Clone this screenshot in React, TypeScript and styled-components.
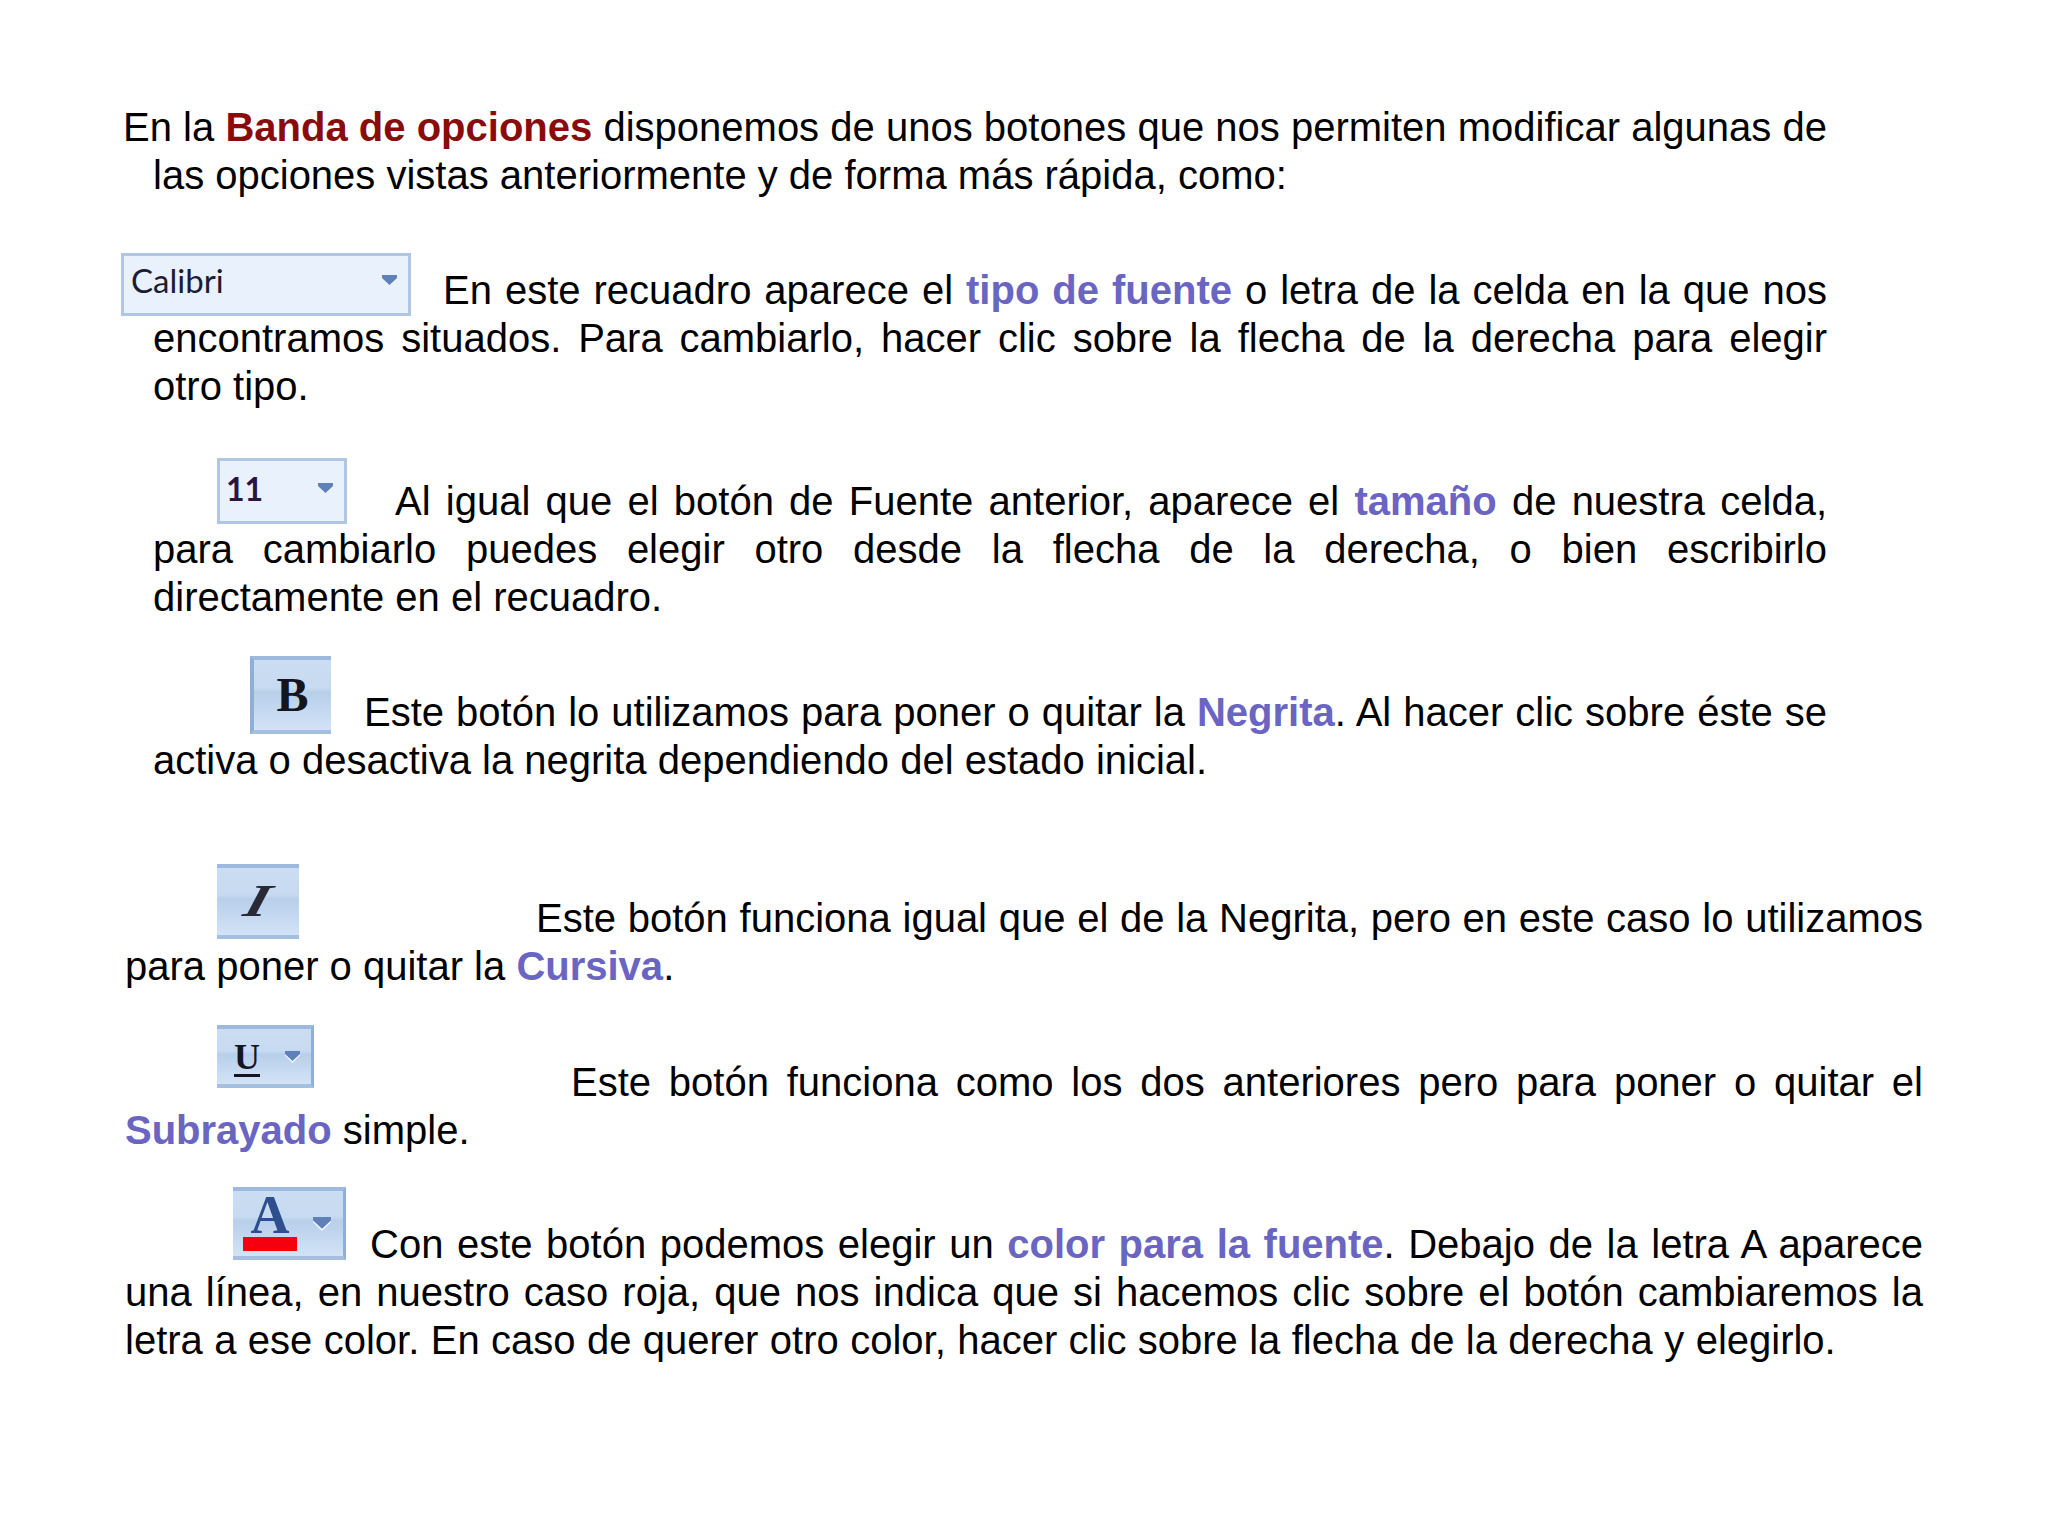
import React from "react";
import styled, { createGlobalStyle } from "styled-components";

const Global = createGlobalStyle`
  html, body { margin: 0; padding: 0; background: #fff; }
`;

const Page = styled.main`
  width: 2048px;
  height: 1536px;
  box-sizing: border-box;
  padding-top: 103px;
  background: #fff;
  color: #000;
  font-family: "Liberation Sans", Arial, sans-serif;
  font-size: 40px;
  line-height: 48px;
  overflow: hidden;
`;

const Para = styled.p<{ $left: number; $right: number; $indent: number; $gap: number; $spread?: number }>`
  margin: ${(p) => p.$gap}px 0 0 0;
  padding: 0 ${(p) => 2048 - p.$right}px 0 ${(p) => p.$left}px;
  text-indent: ${(p) => p.$indent}px;
  text-align: justify;
  word-spacing: ${(p) => p.$spread ?? 0}px;
`;

const Term = styled.strong`
  font-weight: 700;
  color: #6a65c2;
`;

const Title = styled.strong`
  font-weight: 700;
  color: #8a0b0b;
`;

/* A control sits in the first line of its paragraph but takes no height from it:
   its margin box is zero tall, so the text keeps an even line pitch. */
const Control = styled.span<{ $w: number; $h: number; $top: number; $after: number }>`
  display: inline-flex;
  align-items: center;
  justify-content: space-between;
  box-sizing: border-box;
  width: ${(p) => p.$w}px;
  height: ${(p) => p.$h}px;
  margin: ${(p) => p.$top}px ${(p) => p.$after}px ${(p) => -(p.$h + p.$top)}px 0;
  vertical-align: top;
  text-indent: 0;
  text-align: left;
  word-spacing: 0;
`;

const Field = styled(Control)`
  padding: 0 11px 8px 7px;
  border: 3px solid #b0c6e2;
  background: #e9f1fc;
  font-family: Lato, "Open Sans", sans-serif;
  font-size: 33px;
  line-height: 1;
  color: #1c1c34;
`;

const SizeField = styled(Field)`
  padding-bottom: 4px;
  padding-left: 6px;
  font-size: 32px;
  font-weight: 700;
  color: #2a1440;
`;

const Button = styled(Control)`
  justify-content: center;
  border-top: 4px solid #9db9dd;
  border-bottom: 4px solid #a5bfe0;
  background: linear-gradient(#cbddf2 0%, #c6daf1 40%, #b8cfea 46%, #c3d8f0 70%, #d3e3f6 100%);
  font-family: "Liberation Serif", serif;
  font-weight: 700;
  line-height: 1;
  color: #15151f;
`;

const BoldButton = styled(Button)`
  border-left: 4px solid #8fafd8;
  padding-bottom: 0;
  font-size: 48px;
`;

const ItalicButton = styled(Button)`
  padding-bottom: 2px;
  font-size: 46px;
  font-style: italic;
`;

const ItalicGlyph = styled.span`
  display: inline-block;
  transform: scaleX(1.35) skewX(-12deg);
  color: #2a2a36;
`;

const SplitButton = styled(Button)`
  justify-content: space-between;
  border-right: 3px solid #8fafd8;
  padding: 0 11px 0 17px;
`;

const ColorButton = styled(SplitButton)`
  padding: 0 12px 0 10px;
`;

const Under = styled.span`
  font-size: 36px;
  text-decoration: underline;
  text-decoration-thickness: 3px;
  text-underline-offset: 5px;
`;

const Swatch = styled.span`
  display: flex;
  flex-direction: column;
  align-items: center;
  width: 54px;
  padding-bottom: 1px;
  color: #2d4f8e;
  font-size: 54px;
  line-height: 41px;
  &::after {
    content: "";
    width: 54px;
    height: 14px;
    margin-top: 1px;
    background: #f5000f;
  }
`;

const Caret = ({ glow = false, w = 15, h = 10 }: { glow?: boolean; w?: number; h?: number }) => (
  <svg width={w} height={h + 2} viewBox="0 0 15 12" preserveAspectRatio="none" aria-hidden="true">
    {glow && <path d="M0 2H15V4.5L7.5 12 0 4.5Z" fill="#f4f8fd" />}
    <path d="M0 0H15V3L7.5 10 0 3Z" fill="#5f80b8" />
  </svg>
);

export default function App() {
  return (
    <Page>
      <Global />
      <Para $left={153} $right={1827} $indent={-30} $gap={0}>
        En la <Title>Banda de opciones</Title> disponemos de unos botones que nos permiten modificar algunas de las opciones vistas anteriormente y de forma más rápida, como:
      </Para>
      <Para $left={153} $right={1827} $indent={-32} $gap={67}>
        <Field $w={290} $h={63} $top={-13} $after={32}>
          Calibri
          <Caret />
        </Field>
        En este recuadro aparece el <Term>tipo de fuente</Term> o letra de la celda en la que nos encontramos situados. Para cambiarlo, hacer clic sobre la flecha de la derecha para elegir otro tipo.
      </Para>
      <Para $left={153} $right={1827} $indent={64} $gap={67}>
        <SizeField $w={130} $h={66} $top={-19} $after={48}>
          11
          <Caret />
        </SizeField>
        Al igual que el botón de Fuente anterior, aparece el <Term>tamaño</Term> de nuestra celda, para cambiarlo puedes elegir otro desde la flecha de la derecha, o bien escribirlo directamente en el recuadro.
      </Para>
      <Para $left={153} $right={1827} $indent={97} $gap={67}>
        <BoldButton $w={81} $h={78} $top={-32} $after={33}>
          B
        </BoldButton>
        Este botón lo utilizamos para poner o quitar la <Term>Negrita</Term>. Al hacer clic sobre éste se activa o desactiva la negrita dependiendo del estado inicial.
      </Para>
      <Para $left={125} $right={1923} $indent={92} $gap={110}>
        <ItalicButton $w={82} $h={75} $top={-30} $after={237}>
          <ItalicGlyph>I</ItalicGlyph>
        </ItalicButton>
        Este botón funciona igual que el de la Negrita, pero en este caso lo utilizamos para poner o quitar la <Term>Cursiva</Term>.
      </Para>
      <Para $left={125} $right={1923} $indent={92} $gap={68}>
        <SplitButton $w={97} $h={63} $top={-33} $after={257}>
          <Under>U</Under>
          <Caret glow />
        </SplitButton>
        Este botón funciona como los dos anteriores pero para poner o quitar el <Term>Subrayado</Term> simple.
      </Para>
      <Para $left={125} $right={1923} $indent={108} $gap={66} $spread={0.28}>
        <ColorButton $w={113} $h={73} $top={-33} $after={24}>
          <Swatch>A</Swatch>
          <Caret glow w={18} h={12} />
        </ColorButton>
        Con este botón podemos elegir un <Term>color para la fuente</Term>. Debajo de la letra A aparece una línea, en nuestro caso roja, que nos indica que si hacemos clic sobre el botón cambiaremos la letra a ese color. En caso de querer otro color, hacer clic sobre la flecha de la derecha y elegirlo.
      </Para>
    </Page>
  );
}
